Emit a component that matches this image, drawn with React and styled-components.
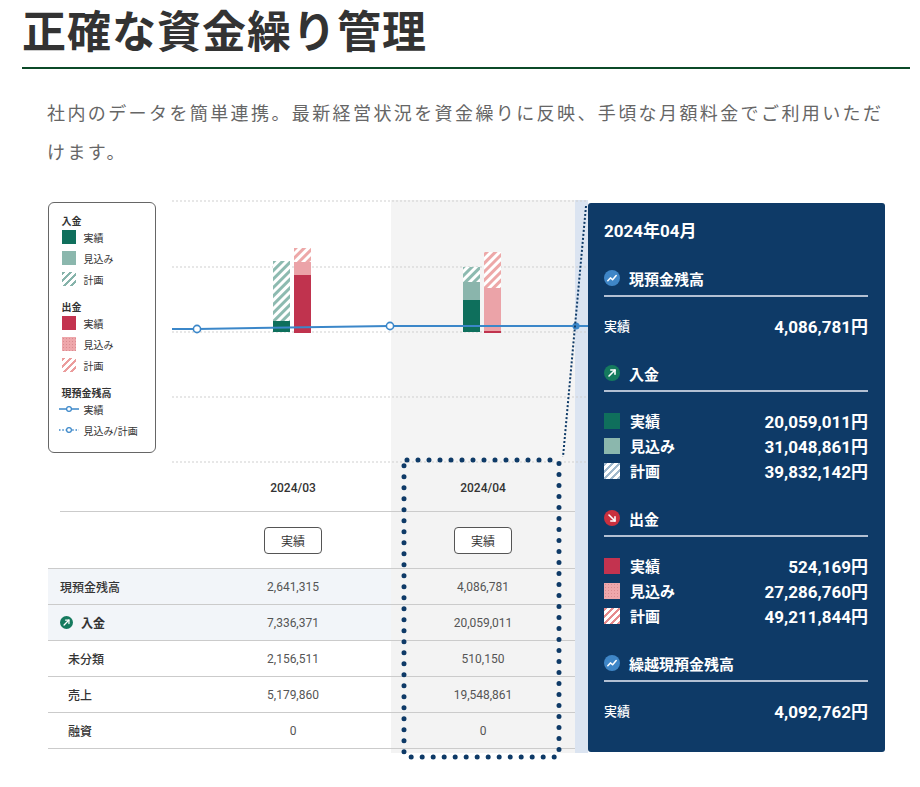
import styled, { createGlobalStyle } from "styled-components";

const NAVY = "#0e3a67";
const COLS = "147px 196px 184px 13px";

const GlobalStyle = createGlobalStyle`
  body {
    margin: 0;
    background: #fff;
    font-family: "Noto Sans CJK JP", sans-serif;
  }
`;

// swatch fills shared by legend and panel
const swatchBg = {
  inActual: "#0f6f5c",
  inForecast: "#8bb7ad",
  inPlan: "repeating-linear-gradient(135deg, #86b3aa 0 2.5px, #fff 2.5px 5px)",
  outActual: "#c3334f",
  outForecast:
    "radial-gradient(#d98b90 0.6px, transparent 0.8px) 0 0 / 3px 3px, #eea7ab",
  outPlan: "repeating-linear-gradient(135deg, #eb9c9c 0 2.5px, #fff 2.5px 5px)",
  panelInPlan: "repeating-linear-gradient(135deg, #9fb8cc 0 2.5px, #fff 2.5px 5px)",
  panelOutPlan: "repeating-linear-gradient(135deg, #e58a8c 0 2.5px, #fff 2.5px 5px)",
};

const tableRows = [
  { label: "現預金残高", mar: "2,641,315", apr: "4,086,781", shaded: true },
  { label: "入金", mar: "7,336,371", apr: "20,059,011", shaded: true, icon: true },
  { label: "未分類", mar: "2,156,511", apr: "510,150", indent: true },
  { label: "売上", mar: "5,179,860", apr: "19,548,861", indent: true },
  { label: "融資", mar: "0", apr: "0", indent: true },
];

const sections = [
  {
    title: "現預金残高",
    icon: "trend",
    rows: [{ label: "実績", value: "4,086,781円", plain: true }],
  },
  {
    title: "入金",
    icon: "up",
    rows: [
      { label: "実績", swatch: "inActual", value: "20,059,011円" },
      { label: "見込み", swatch: "inForecast", value: "31,048,861円" },
      { label: "計画", swatch: "panelInPlan", value: "39,832,142円" },
    ],
  },
  {
    title: "出金",
    icon: "down",
    rows: [
      { label: "実績", swatch: "outActual", value: "524,169円" },
      { label: "見込み", swatch: "outForecast", value: "27,286,760円" },
      { label: "計画", swatch: "panelOutPlan", value: "49,211,844円" },
    ],
  },
  {
    title: "繰越現預金残高",
    icon: "trend",
    rows: [{ label: "実績", value: "4,092,762円", plain: true }],
  },
];

const CircleIcon = ({ type, size = 16 }) => {
  const fill = type === "up" ? "#157a5e" : type === "down" ? "#c9303e" : "#3f86c7";
  return (
    <svg width={size} height={size} viewBox="0 0 16 16">
      <circle cx="8" cy="8" r="8" fill={fill} />
      {type === "trend" && (
        <path
          d="M3.8 10.8 L6.4 7.9 L8.6 9.8 L12.2 5.6"
          fill="none"
          stroke="#fff"
          strokeWidth="1.5"
          strokeLinecap="round"
          strokeLinejoin="round"
        />
      )}
      {type === "up" && (
        <g fill="none" stroke="#fff" strokeWidth="1.6" strokeLinecap="round" strokeLinejoin="round">
          <path d="M5 11 L11 5" />
          <path d="M6.8 5 H11 V9.2" />
        </g>
      )}
      {type === "down" && (
        <g fill="none" stroke="#fff" strokeWidth="1.6" strokeLinecap="round" strokeLinejoin="round">
          <path d="M5 5 L11 11" />
          <path d="M11 6.8 V11 H6.8" />
        </g>
      )}
    </svg>
  );
};

const BalanceMark = ({ dotted }) => (
  <svg width="20" height="8" viewBox="0 0 20 8">
    <line
      x1="0"
      y1="4"
      x2="20"
      y2="4"
      stroke="#3b87c9"
      strokeWidth="1.5"
      strokeDasharray={dotted ? "1.5 1.8" : undefined}
    />
    <circle cx="10" cy="4" r="2.4" fill="#fff" stroke="#3b87c9" strokeWidth="1.2" />
  </svg>
);

const Chart = () => (
  <svg width="416" height="265" viewBox="0 0 416 265">
    <defs>
      <pattern id="hatchIn" width="6" height="6" patternUnits="userSpaceOnUse" patternTransform="rotate(45)">
        <rect width="6" height="6" fill="#fff" />
        <rect width="3" height="6" fill="#8dbab0" />
      </pattern>
      <pattern id="hatchOut" width="6" height="6" patternUnits="userSpaceOnUse" patternTransform="rotate(45)">
        <rect width="6" height="6" fill="#fff" />
        <rect width="3" height="6" fill="#eda8a8" />
      </pattern>
    </defs>
    <rect x="219" y="0" width="184" height="265" fill="#f4f4f4" />
    <rect x="403" y="0" width="13" height="265" fill="#dbe4f1" />
    {[1, 67, 132, 197, 262].map((y) => (
      <line key={y} x1="0" y1={y} x2="416" y2={y} stroke="#cfcfcf" strokeDasharray="2 2" />
    ))}

    {/* 2024/03 */}
    <rect x="101" y="61" width="17" height="60" fill="url(#hatchIn)" />
    <rect x="101" y="121" width="17" height="11" fill="#0e6f5c" />
    <rect x="122" y="48" width="17" height="14" fill="url(#hatchOut)" />
    <rect x="122" y="62" width="17" height="13" fill="#eba3a8" />
    <rect x="122" y="75" width="17" height="58" fill="#c0334e" />

    {/* 2024/04 */}
    <rect x="291" y="67" width="17" height="15" fill="url(#hatchIn)" />
    <rect x="291" y="82" width="17" height="18" fill="#8ab5ac" />
    <rect x="291" y="100" width="17" height="32" fill="#0e6f5c" />
    <rect x="312" y="52" width="17" height="36" fill="url(#hatchOut)" />
    <rect x="312" y="88" width="17" height="43" fill="#eba3a8" />
    <rect x="312" y="131" width="17" height="2" fill="#c0334e" />

    <polyline points="0,129 25,129 218,126 416,126" fill="none" stroke="#3b87c9" strokeWidth="2" />
    <circle cx="25" cy="129" r="3.6" fill="#fff" stroke="#3b87c9" strokeWidth="1.6" />
    <circle cx="218" cy="126" r="3.6" fill="#fff" stroke="#3b87c9" strokeWidth="1.6" />
    <circle cx="404" cy="126" r="3.6" fill="#3b87c9" />

    <line x1="414" y1="6" x2="391" y2="257" stroke={NAVY} strokeWidth="2" strokeDasharray="2 2" />
  </svg>
);

const App = () => (
  <>
    <GlobalStyle />
    <Page>
      <Heading>正確な資金繰り管理</Heading>
      <Lead>
        社内のデータを簡単連携。最新経営状況を資金繰りに反映、手頃な月額料金でご利用いただけます。
      </Lead>
      <Figure>
        <Left>
          <ChartArea>
            <Legend>
              <LegendGroup>
                <LegendTitle>入金</LegendTitle>
                <LegendItem><Swatch $kind="inActual" $size={14} />実績</LegendItem>
                <LegendItem><Swatch $kind="inForecast" $size={14} />見込み</LegendItem>
                <LegendItem><Swatch $kind="inPlan" $size={14} />計画</LegendItem>
              </LegendGroup>
              <LegendGroup>
                <LegendTitle>出金</LegendTitle>
                <LegendItem><Swatch $kind="outActual" $size={14} />実績</LegendItem>
                <LegendItem><Swatch $kind="outForecast" $size={14} />見込み</LegendItem>
                <LegendItem><Swatch $kind="outPlan" $size={14} />計画</LegendItem>
              </LegendGroup>
              <LegendGroup>
                <LegendTitle>現預金残高</LegendTitle>
                <LegendItem $line><BalanceMark />実績</LegendItem>
                <LegendItem $line><BalanceMark dotted />見込み/計画</LegendItem>
              </LegendGroup>
            </Legend>
            <Chart />
          </ChartArea>

          <TRow $h={47}>
            <Cell $line $inset />
            <Cell $line $center $head>2024/03</Cell>
            <Cell $line $center $head $hl>2024/04</Cell>
            <Cell $strip />
          </TRow>
          <TRow $h={57}>
            <Cell $line />
            <Cell $line $center><TagButton>実績</TagButton></Cell>
            <Cell $line $center $hl><TagButton>実績</TagButton></Cell>
            <Cell $strip />
          </TRow>
          {tableRows.map((r) => (
            <TRow key={r.label} $h={36} $shaded={r.shaded}>
              <Cell $line>
                <RowLabel $indent={r.indent} $bold={r.icon}>
                  {r.icon && <CircleIcon type="up" size={13} />}
                  {r.label}
                </RowLabel>
              </Cell>
              <Cell $line $center><Num>{r.mar}</Num></Cell>
              <Cell $line $center $hl><Num>{r.apr}</Num></Cell>
              <Cell $strip />
            </TRow>
          ))}
          <TRow $h={4}>
            <Cell />
            <Cell />
            <Cell $hl />
            <Cell $strip />
          </TRow>

          <Focus width="165" height="307" viewBox="0 0 165 307">
            <rect
              x="5"
              y="5"
              width="155"
              height="297"
              rx="3"
              fill="none"
              stroke={NAVY}
              strokeWidth="5"
              strokeLinecap="round"
              strokeDasharray="0 11"
            />
          </Focus>
        </Left>

        <Panel>
          <PanelTitle>2024年04月</PanelTitle>
          {sections.map((s) => (
            <Section key={s.title}>
              <SectionHead>
                <CircleIcon type={s.icon} />
                {s.title}
              </SectionHead>
              <SectionRows>
                {s.rows.map((r) => (
                  <PanelRow key={r.label}>
                    <PanelLabel $plain={r.plain}>
                      {r.swatch && <Swatch $kind={r.swatch} $size={16} />}
                      {r.label}
                    </PanelLabel>
                    <Value>{r.value}</Value>
                  </PanelRow>
                ))}
              </SectionRows>
            </Section>
          ))}
        </Panel>
      </Figure>
    </Page>
  </>
);

const Page = styled.div`
  width: 888px;
  padding: 0 0 30px 22px;
`;

const Heading = styled.h1`
  margin: 0;
  padding: 0 0 9px;
  border-bottom: 2px solid #0b4a28;
  font-size: 44px;
  line-height: 58px;
  font-weight: 700;
  letter-spacing: 1px;
  color: #333;
`;

const Lead = styled.p`
  margin: 24px 0 0 25px;
  width: 845px;
  font-size: 18px;
  line-height: 39px;
  letter-spacing: 2.4px;
  color: #666;
`;

const Figure = styled.div`
  display: flex;
  align-items: flex-start;
  margin: 29px 0 0 26px;
`;

const Left = styled.div`
  position: relative;
  width: 540px;
  font-family: Roboto, "Noto Sans CJK JP", sans-serif;
`;

const ChartArea = styled.div`
  display: grid;
  grid-template-columns: 124px 416px;
  height: 265px;
`;

const Legend = styled.div`
  box-sizing: border-box;
  width: 108px;
  height: 251px;
  margin-top: 2px;
  padding: 12.5px 0 0 12.5px;
  border: 1.5px solid #666;
  border-radius: 6px;
  background: #fff;
  color: #333;
  font-size: 10px;
`;

const LegendGroup = styled.div`
  & + & {
    margin-top: 12px;
  }
`;

const LegendTitle = styled.div`
  height: 12px;
  line-height: 12px;
  margin-bottom: -1px;
  font-weight: 700;
`;

const LegendItem = styled.div`
  display: flex;
  align-items: center;
  gap: ${(p) => (p.$line ? "5px" : "8px")};
  height: 21px;
  margin-left: ${(p) => (p.$line ? "-3px" : "0")};
`;

const Swatch = styled.span`
  flex: none;
  width: ${(p) => p.$size}px;
  height: ${(p) => p.$size}px;
  background: ${(p) => swatchBg[p.$kind]};
`;

const TRow = styled.div`
  display: grid;
  grid-template-columns: ${COLS};
  height: ${(p) => p.$h}px;
  background: ${(p) => (p.$shaded ? "#f2f5f9" : "transparent")};
`;

const Cell = styled.div`
  display: flex;
  align-items: center;
  justify-content: ${(p) => (p.$center ? "center" : "flex-start")};
  margin-left: ${(p) => (p.$inset ? "12px" : "0")};
  border-bottom: ${(p) => (p.$line ? "1.5px solid #cbcbcb" : "none")};
  background: ${(p) => (p.$hl ? "#f3f3f3" : p.$strip ? "#dbe4f1" : "transparent")};
  font-size: 12px;
  font-weight: ${(p) => (p.$head ? 500 : 400)};
  color: #333;
`;

const TagButton = styled.div`
  box-sizing: border-box;
  display: flex;
  align-items: center;
  justify-content: center;
  width: 58px;
  height: 27px;
  border: 1.5px solid #555;
  border-radius: 4px;
  background: #fff;
  font-size: 12px;
  color: #333;
`;

const RowLabel = styled.div`
  display: flex;
  align-items: center;
  gap: 8px;
  padding-left: ${(p) => (p.$indent ? "20px" : "12px")};
  font-size: 12px;
  font-weight: ${(p) => (p.$bold ? 700 : 500)};
  color: #333;
`;

const Num = styled.span`
  font-size: 12px;
  color: #555;
`;

const Focus = styled.svg`
  position: absolute;
  left: 351px;
  top: 255px;
  pointer-events: none;
`;

const Panel = styled.div`
  box-sizing: border-box;
  width: 297px;
  height: 549px;
  margin-top: 3px;
  padding: 16px 17px 0 16px;
  border-radius: 3px;
  background: ${NAVY};
  color: #fff;
  font-family: Roboto, "Noto Sans CJK JP", sans-serif;
`;

const PanelTitle = styled.div`
  font-size: 17px;
  font-weight: 700;
  line-height: 24px;
  margin-bottom: 2px;
`;

const Section = styled.div`
  margin-top: 23px;
`;

const SectionHead = styled.div`
  display: flex;
  align-items: center;
  gap: 9px;
  height: 24px;
  padding-bottom: 5px;
  border-bottom: 2px solid #b3c0d3;
  font-size: 15px;
  font-weight: 700;
`;

const SectionRows = styled.div`
  margin-top: 16px;
`;

const PanelRow = styled.div`
  display: flex;
  align-items: center;
  justify-content: space-between;
  height: 25px;
`;

const PanelLabel = styled.div`
  display: flex;
  align-items: center;
  gap: 10px;
  font-size: ${(p) => (p.$plain ? "13px" : "15px")};
  font-weight: ${(p) => (p.$plain ? 500 : 700)};
`;

const Value = styled.span`
  font-size: 17px;
  font-weight: 700;
`;

export default App;
